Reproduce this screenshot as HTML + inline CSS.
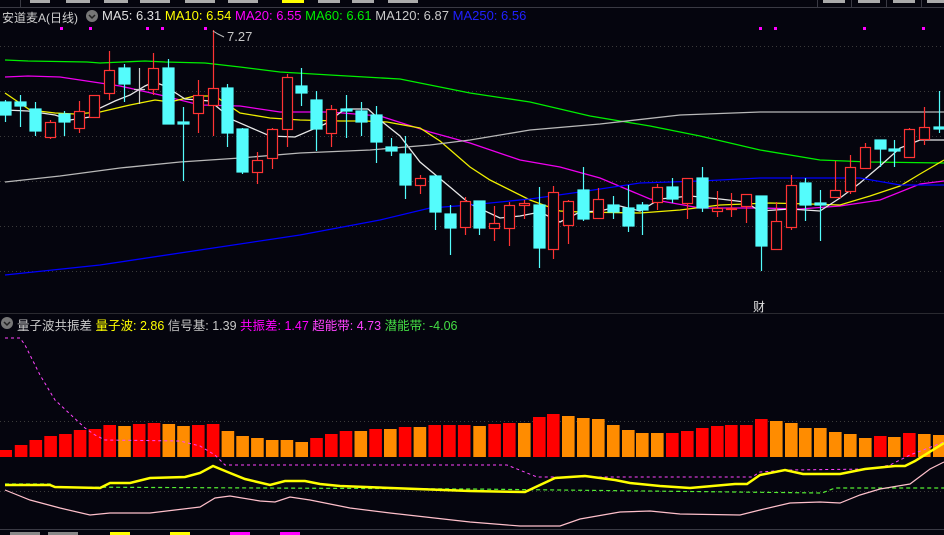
<!DOCTYPE html>
<html><head><meta charset="utf-8"><style>
html,body{margin:0;padding:0;background:#05050e;width:944px;height:535px;overflow:hidden;font-family:"Liberation Sans","Noto Sans CJK SC",sans-serif;}
.t{position:absolute;font-size:12px;white-space:nowrap;}
</style></head><body>
<svg width="944" height="535" style="position:absolute;left:0;top:0" xmlns="http://www.w3.org/2000/svg">
<rect width="944" height="535" fill="#05050e"/>
<line x1="0" y1="7.5" x2="944" y2="7.5" stroke="#3a3a44"/>
<g stroke="#3a3a44"><line x1="817.5" y1="0" x2="817.5" y2="7"/><line x1="851.5" y1="0" x2="851.5" y2="7"/><line x1="886.5" y1="0" x2="886.5" y2="7"/><line x1="921.5" y1="0" x2="921.5" y2="7"/><line x1="20.5" y1="0" x2="20.5" y2="7"/></g>
<g fill="#aaaaaa"><rect x="30" y="0" width="20" height="3"/><rect x="66" y="0" width="24" height="3"/><rect x="104" y="0" width="24" height="3"/><rect x="140" y="0" width="30" height="3"/><rect x="185" y="0" width="30" height="3"/><rect x="228" y="0" width="30" height="3"/><rect x="282" y="0" width="22" height="3" fill="#ffff00"/><rect x="318" y="0" width="22" height="3"/><rect x="352" y="0" width="22" height="3"/><rect x="388" y="0" width="30" height="3"/><rect x="823" y="0" width="22" height="3"/><rect x="858" y="0" width="22" height="3"/><rect x="893" y="0" width="22" height="3"/><rect x="927" y="0" width="17" height="3"/></g>
<g stroke="#3a3a3a" stroke-dasharray="1,3">
<line x1="0" y1="46.5" x2="944" y2="46.5"/><line x1="0" y1="91.5" x2="944" y2="91.5"/><line x1="0" y1="136.5" x2="944" y2="136.5"/><line x1="0" y1="181.5" x2="944" y2="181.5"/><line x1="0" y1="226.5" x2="944" y2="226.5"/><line x1="0" y1="271.5" x2="944" y2="271.5"/>
<line x1="0" y1="421.5" x2="944" y2="421.5"/><line x1="0" y1="491.5" x2="944" y2="491.5"/>
</g>
<line x1="0" y1="313.5" x2="944" y2="313.5" stroke="#2a2a30"/>
<line x1="0" y1="529.5" x2="944" y2="529.5" stroke="#3a3a44"/>
<g fill="#ff00ff"><rect x="60" y="27" width="3" height="3"/><rect x="89" y="27" width="3" height="3"/><rect x="146" y="27" width="3" height="3"/><rect x="161" y="27" width="3" height="3"/><rect x="204" y="27" width="3" height="3"/><rect x="759" y="27" width="3" height="3"/><rect x="774" y="27" width="3" height="3"/><rect x="863" y="27" width="3" height="3"/><rect x="922" y="27" width="3" height="3"/></g>
<g fill="none" stroke-width="1.3">
<polyline stroke="#00ee00" points="5,60 28,61 87,62 100,63 145,61 165,62 205,63 240,67 280,72 330,75 400,79 470,93 530,102 590,116 650,126 700,136 760,150 820,160 870,162 944,163"/>
<polyline stroke="#ee00ee" points="5,77 28,76 60,77 80,80 120,86 160,95 200,105 240,106 280,112 330,112 380,116 430,132 470,143 520,160 560,167 600,178 650,199 700,208 760,208 800,209 840,206 880,200 920,184 944,181"/>
<polyline stroke="#eeee00" points="5,93 30,110 55,113 75,114 100,112 130,105 155,100 170,102 195,96 215,96 240,113 270,118 300,120 340,121 365,121 387,122 420,128 440,141 470,167 490,180 530,200 560,211 580,212 640,213 680,210 720,205 770,203 810,204 840,205 870,196 900,186 920,174 944,160"/>
<polyline stroke="#e8e8e8" points="5,110 28,111 55,115 70,120 90,117 100,108 115,101 130,95 145,86 154,82 165,86 185,99 210,101 233,120 270,136 295,137 325,124 345,109 368,109 380,120 400,136 420,162 450,187 470,204 500,218 520,216 540,212 560,222 580,212 600,211 620,206 640,211 660,199 690,196 720,199 745,202 760,211 790,209 820,211 840,198 860,183 880,166 900,148 920,140 944,140"/>
<polyline stroke="#b8b8b8" points="5,182 60,176 120,168 180,162 240,158 300,153 370,150 430,145 470,140 530,130 600,124 680,115 760,112 900,112 944,112"/>
<polyline stroke="#0000ff" points="5,275 100,265 200,250 300,235 380,220 430,208 470,205 530,199 580,192 640,183 700,181 760,178 860,178 900,185 944,185"/>
</g>
<g stroke-width="1.2">
<g stroke="#54fcfc" fill="#54fcfc">
<line x1="5.5" y1="100" x2="5.5" y2="122"/><rect x="0" y="102" width="11" height="13"/>
<line x1="20.5" y1="95" x2="20.5" y2="127"/><rect x="15" y="102" width="11" height="4"/>
<line x1="35.5" y1="102" x2="35.5" y2="136"/><rect x="30" y="109" width="11" height="22"/>
<line x1="64.5" y1="111" x2="64.5" y2="136"/><rect x="59" y="114" width="11" height="8"/>
<line x1="124.5" y1="64" x2="124.5" y2="102"/><rect x="119" y="68" width="11" height="16"/>
<line x1="168.5" y1="59" x2="168.5" y2="124"/><rect x="163" y="68" width="11" height="56"/>
<line x1="183.5" y1="107" x2="183.5" y2="181"/><rect x="178" y="122" width="11" height="2"/>
<line x1="227.5" y1="84" x2="227.5" y2="147"/><rect x="222" y="88" width="11" height="45"/>
<line x1="242.5" y1="128" x2="242.5" y2="174"/><rect x="237" y="129" width="11" height="43"/>
<line x1="301.5" y1="68" x2="301.5" y2="106"/><rect x="296" y="86" width="11" height="7"/>
<line x1="316.5" y1="91" x2="316.5" y2="151"/><rect x="311" y="100" width="11" height="29"/>
<line x1="346.5" y1="95" x2="346.5" y2="138"/><rect x="341" y="109" width="11" height="2"/>
<line x1="361.5" y1="102" x2="361.5" y2="136"/><rect x="356" y="111" width="11" height="11"/>
<line x1="376.5" y1="106" x2="376.5" y2="163"/><rect x="371" y="115" width="11" height="27"/>
<line x1="391.5" y1="138" x2="391.5" y2="156"/><rect x="386" y="147" width="11" height="4"/>
<line x1="405.5" y1="136" x2="405.5" y2="199"/><rect x="400" y="154" width="11" height="31"/>
<line x1="435.5" y1="176" x2="435.5" y2="230"/><rect x="430" y="176" width="11" height="36"/>
<line x1="450.5" y1="205" x2="450.5" y2="255"/><rect x="445" y="214" width="11" height="14"/>
<line x1="479.5" y1="201" x2="479.5" y2="235"/><rect x="474" y="201" width="11" height="27"/>
<line x1="539.5" y1="187" x2="539.5" y2="268"/><rect x="534" y="205" width="11" height="43"/>
<line x1="583.5" y1="167" x2="583.5" y2="221"/><rect x="578" y="190" width="11" height="29"/>
<line x1="613.5" y1="196" x2="613.5" y2="219"/><rect x="608" y="205" width="11" height="7"/>
<line x1="628.5" y1="185" x2="628.5" y2="232"/><rect x="623" y="208" width="11" height="18"/>
<line x1="642.5" y1="202" x2="642.5" y2="235"/><rect x="637" y="205" width="11" height="5"/>
<line x1="672.5" y1="178" x2="672.5" y2="203"/><rect x="667" y="187" width="11" height="12"/>
<line x1="702.5" y1="167" x2="702.5" y2="212"/><rect x="697" y="178" width="11" height="30"/>
<line x1="761.5" y1="196" x2="761.5" y2="271"/><rect x="756" y="196" width="11" height="50"/>
<line x1="805.5" y1="178" x2="805.5" y2="221"/><rect x="800" y="183" width="11" height="22"/>
<line x1="820.5" y1="190" x2="820.5" y2="241"/><rect x="815" y="203" width="11" height="2"/>
<line x1="880.5" y1="140" x2="880.5" y2="167"/><rect x="875" y="140" width="11" height="9"/>
<line x1="894.5" y1="140" x2="894.5" y2="167"/><rect x="889" y="149" width="11" height="2"/>
<line x1="939.5" y1="91" x2="939.5" y2="133"/><rect x="934" y="127" width="10" height="2"/>
</g>
<g stroke="#ff3333" fill="#05050e">
<line x1="50.5" y1="120" x2="50.5" y2="139"/><rect x="45.5" y="122.5" width="10" height="15"/>
<line x1="79.5" y1="101" x2="79.5" y2="133"/><rect x="74.5" y="111.5" width="10" height="17"/>
<line x1="94.5" y1="95" x2="94.5" y2="118"/><rect x="89.5" y="95.5" width="10" height="22"/>
<line x1="109.5" y1="51" x2="109.5" y2="100"/><rect x="104.5" y="70.5" width="10" height="23"/>
<line x1="153.5" y1="53" x2="153.5" y2="95"/><rect x="148.5" y="68.5" width="10" height="21"/>
<line x1="198.5" y1="80" x2="198.5" y2="133"/><rect x="193.5" y="95.5" width="10" height="18"/>
<line x1="213.5" y1="30" x2="213.5" y2="136"/><rect x="208.5" y="88.5" width="10" height="17"/>
<line x1="257.5" y1="152" x2="257.5" y2="184"/><rect x="252.5" y="160.5" width="10" height="12"/>
<line x1="272.5" y1="128" x2="272.5" y2="169"/><rect x="267.5" y="129.5" width="10" height="29"/>
<line x1="287.5" y1="74" x2="287.5" y2="147"/><rect x="282.5" y="77.5" width="10" height="52"/>
<line x1="331.5" y1="105" x2="331.5" y2="147"/><rect x="326.5" y="109.5" width="10" height="24"/>
<line x1="420.5" y1="175" x2="420.5" y2="194"/><rect x="415.5" y="178.5" width="10" height="7"/>
<line x1="465.5" y1="197" x2="465.5" y2="235"/><rect x="460.5" y="201.5" width="10" height="26"/>
<line x1="494.5" y1="206" x2="494.5" y2="241"/><rect x="489.5" y="223.5" width="10" height="5"/>
<line x1="509.5" y1="202" x2="509.5" y2="246"/><rect x="504.5" y="205.5" width="10" height="23"/>
<line x1="524.5" y1="200" x2="524.5" y2="219"/><rect x="519.5" y="203.5" width="10" height="2"/>
<line x1="553.5" y1="186" x2="553.5" y2="259"/><rect x="548.5" y="192.5" width="10" height="57"/>
<line x1="568.5" y1="200" x2="568.5" y2="244"/><rect x="563.5" y="201.5" width="10" height="24"/>
<line x1="598.5" y1="188" x2="598.5" y2="219"/><rect x="593.5" y="199.5" width="10" height="19"/>
<line x1="657.5" y1="184" x2="657.5" y2="210"/><rect x="652.5" y="187.5" width="10" height="15"/>
<line x1="687.5" y1="178" x2="687.5" y2="219"/><rect x="682.5" y="178.5" width="10" height="25"/>
<line x1="717.5" y1="191" x2="717.5" y2="217"/><rect x="712.5" y="208.5" width="10" height="3"/>
<line x1="731.5" y1="193" x2="731.5" y2="217"/><rect x="726.5" y="208.5" width="10" height="1"/>
<line x1="746.5" y1="194" x2="746.5" y2="223"/><rect x="741.5" y="194.5" width="10" height="12"/>
<line x1="776.5" y1="202" x2="776.5" y2="249"/><rect x="771.5" y="221.5" width="10" height="28"/>
<line x1="791.5" y1="175" x2="791.5" y2="230"/><rect x="786.5" y="185.5" width="10" height="42"/>
<line x1="835.5" y1="161" x2="835.5" y2="197"/><rect x="830.5" y="190.5" width="10" height="7"/>
<line x1="850.5" y1="155" x2="850.5" y2="194"/><rect x="845.5" y="167.5" width="10" height="24"/>
<line x1="865.5" y1="143" x2="865.5" y2="168"/><rect x="860.5" y="147.5" width="10" height="21"/>
<line x1="909.5" y1="128" x2="909.5" y2="158"/><rect x="904.5" y="129.5" width="10" height="28"/>
<line x1="924.5" y1="107" x2="924.5" y2="145"/><rect x="919.5" y="127.5" width="10" height="12"/>
</g>
<g stroke="#cccccc"><line x1="139.5" y1="68" x2="139.5" y2="104"/><line x1="134" y1="89.5" x2="145" y2="89.5"/></g>
</g>
<polyline points="213,31 218,34 224,37" fill="none" stroke="#bbbbbb" stroke-width="1"/>
<g>
<rect x="0" y="450" width="12" height="7" fill="#ff0000"/>
<rect x="14.8" y="445" width="12.6" height="12" fill="#ff0000"/>
<rect x="29.5" y="440" width="12.6" height="17" fill="#ff0000"/>
<rect x="44.3" y="436" width="12.6" height="21" fill="#ff0000"/>
<rect x="59.1" y="434" width="12.6" height="23" fill="#ff0000"/>
<rect x="73.8" y="430" width="12.6" height="27" fill="#ff0000"/>
<rect x="88.6" y="429" width="12.6" height="28" fill="#ff0000"/>
<rect x="103.4" y="425" width="12.6" height="32" fill="#ff0000"/>
<rect x="118.2" y="426" width="12.6" height="31" fill="#ff8c00"/>
<rect x="132.9" y="424" width="12.6" height="33" fill="#ff0000"/>
<rect x="147.7" y="423" width="12.6" height="34" fill="#ff0000"/>
<rect x="162.5" y="424" width="12.6" height="33" fill="#ff8c00"/>
<rect x="177.2" y="426" width="12.6" height="31" fill="#ff8c00"/>
<rect x="192" y="425" width="12.6" height="32" fill="#ff0000"/>
<rect x="206.8" y="424" width="12.6" height="33" fill="#ff0000"/>
<rect x="221.6" y="431" width="12.6" height="26" fill="#ff8c00"/>
<rect x="236.3" y="436" width="12.6" height="21" fill="#ff8c00"/>
<rect x="251.1" y="438" width="12.6" height="19" fill="#ff8c00"/>
<rect x="265.9" y="440" width="12.6" height="17" fill="#ff8c00"/>
<rect x="280.6" y="440" width="12.6" height="17" fill="#ff8c00"/>
<rect x="295.4" y="442" width="12.6" height="15" fill="#ff8c00"/>
<rect x="310.2" y="438" width="12.6" height="19" fill="#ff0000"/>
<rect x="325" y="434" width="12.6" height="23" fill="#ff0000"/>
<rect x="339.7" y="431" width="12.6" height="26" fill="#ff0000"/>
<rect x="354.5" y="431" width="12.6" height="26" fill="#ff8c00"/>
<rect x="369.3" y="429" width="12.6" height="28" fill="#ff0000"/>
<rect x="384" y="429" width="12.6" height="28" fill="#ff8c00"/>
<rect x="398.8" y="427" width="12.6" height="30" fill="#ff0000"/>
<rect x="413.6" y="427" width="12.6" height="30" fill="#ff8c00"/>
<rect x="428.4" y="425" width="12.6" height="32" fill="#ff0000"/>
<rect x="443.1" y="425" width="12.6" height="32" fill="#ff0000"/>
<rect x="457.9" y="425" width="12.6" height="32" fill="#ff0000"/>
<rect x="473.3" y="426" width="12.6" height="31" fill="#ff8c00"/>
<rect x="488.3" y="424" width="12.6" height="33" fill="#ff0000"/>
<rect x="503" y="423" width="12.6" height="34" fill="#ff0000"/>
<rect x="518" y="423" width="12.6" height="34" fill="#ff8c00"/>
<rect x="533" y="417" width="12.6" height="40" fill="#ff0000"/>
<rect x="547" y="414" width="12.6" height="43" fill="#ff0000"/>
<rect x="562" y="416" width="12.6" height="41" fill="#ff8c00"/>
<rect x="577" y="418" width="12.6" height="39" fill="#ff8c00"/>
<rect x="592" y="419" width="12.6" height="38" fill="#ff8c00"/>
<rect x="607" y="425" width="12.6" height="32" fill="#ff8c00"/>
<rect x="622" y="430" width="12.6" height="27" fill="#ff8c00"/>
<rect x="636" y="433" width="12.6" height="24" fill="#ff8c00"/>
<rect x="651" y="433" width="12.6" height="24" fill="#ff8c00"/>
<rect x="666" y="433" width="12.6" height="24" fill="#ff0000"/>
<rect x="681" y="431" width="12.6" height="26" fill="#ff0000"/>
<rect x="696" y="428" width="12.6" height="29" fill="#ff0000"/>
<rect x="711" y="426" width="12.6" height="31" fill="#ff0000"/>
<rect x="725" y="425" width="12.6" height="32" fill="#ff0000"/>
<rect x="740" y="425" width="12.6" height="32" fill="#ff0000"/>
<rect x="755" y="419" width="12.6" height="38" fill="#ff0000"/>
<rect x="770" y="421" width="12.6" height="36" fill="#ff8c00"/>
<rect x="785" y="423" width="12.6" height="34" fill="#ff8c00"/>
<rect x="799" y="428" width="12.6" height="29" fill="#ff8c00"/>
<rect x="814" y="428" width="12.6" height="29" fill="#ff8c00"/>
<rect x="829" y="432" width="12.6" height="25" fill="#ff8c00"/>
<rect x="844" y="434" width="12.6" height="23" fill="#ff8c00"/>
<rect x="859" y="438" width="12.6" height="19" fill="#ff8c00"/>
<rect x="874" y="436" width="12.6" height="21" fill="#ff0000"/>
<rect x="888" y="437" width="12.6" height="20" fill="#ff8c00"/>
<rect x="903" y="433" width="12.6" height="24" fill="#ff0000"/>
<rect x="918" y="434" width="12.6" height="23" fill="#ff8c00"/>
<rect x="933" y="435" width="11" height="22" fill="#ff8c00"/>
</g>
<polyline fill="none" stroke="#ff44ff" stroke-width="1" stroke-dasharray="3,3" points="5,338 20,338 25,345 40,375 55,400 85,428 95,435 105,440 180,441 200,446 215,455 225,465 507,465 537,477 752,477 760,472 790,470 870,469 890,465 910,455 944,442"/>
<polyline fill="none" stroke="#55ee33" stroke-width="1.2" stroke-dasharray="4,3" points="5,484 50,484 55,487 470,489 822,493 835,488 944,488"/>
<polyline fill="none" stroke="#ffff00" stroke-width="2.5" points="5,485 50,485 55,487 100,488 110,483 130,483 150,478 185,477 200,473 213,466 230,473 245,479 270,485 285,481 305,481 320,484 340,486 470,491 525,492 555,478 585,476 615,480 630,483 660,486 690,488 735,484 747,484 760,475 785,470 803,474 840,474 865,469 895,466 905,466 915,461 944,443"/>
<polyline fill="none" stroke="#ffc0cb" stroke-width="1.2" points="5,490 30,500 60,508 90,515 110,513 150,513 175,510 200,507 215,498 230,496 260,501 275,502 290,497 310,500 350,508 390,513 470,522 520,526 560,526 580,519 620,512 650,511 680,514 740,515 760,510 790,503 820,502 840,503 860,495 880,489 910,484 930,469 944,462"/>
<g fill="#888"><rect x="10" y="532" width="30" height="3"/><rect x="48" y="532" width="30" height="3"/><rect x="110" y="532" width="20" height="3" fill="#ffff00"/><rect x="170" y="532" width="20" height="3" fill="#ffff00"/><rect x="230" y="532" width="20" height="3" fill="#ff00ff"/><rect x="280" y="532" width="20" height="3" fill="#ff00ff"/></g>
<circle cx="92" cy="16" r="6" fill="#777"/><polyline points="89,15 92,18 95,15" fill="none" stroke="#222" stroke-width="1.5"/>
<circle cx="7" cy="323" r="6" fill="#777"/><polyline points="4,322 7,325 10,322" fill="none" stroke="#222" stroke-width="1.5"/>
</svg>
<div class="t" style="left:2px;top:9px;color:#d0d0d0;font-size:12px;">安道麦A(日线)</div>
<div class="t" style="left:102px;top:8px;font-size:13px;"><span style="color:#e0e0e0">MA5: 6.31</span> <span style="color:#ffff00">MA10: 6.54</span> <span style="color:#ff00ff">MA20: 6.55</span> <span style="color:#00ee00">MA60: 6.61</span> <span style="color:#c8c8c8">MA120: 6.87</span> <span style="color:#2020ff">MA250: 6.56</span></div>
<div class="t" style="left:227px;top:29px;color:#c8c8c8;font-size:13px;">7.27</div>
<div class="t" style="left:753px;top:298px;color:#e0e0e0;">财</div>
<div class="t" style="left:17px;top:315px;font-size:12.5px;"><span style="color:#c8c8c8">量子波共振差</span> <span style="color:#ffff00">量子波: 2.86</span> <span style="color:#c8c8c8">信号基: 1.39</span> <span style="color:#ff00ff">共振差: 1.47</span> <span style="color:#ff44ff">超能带: 4.73</span> <span style="color:#44dd44">潜能带: -4.06</span></div>
</body></html>
